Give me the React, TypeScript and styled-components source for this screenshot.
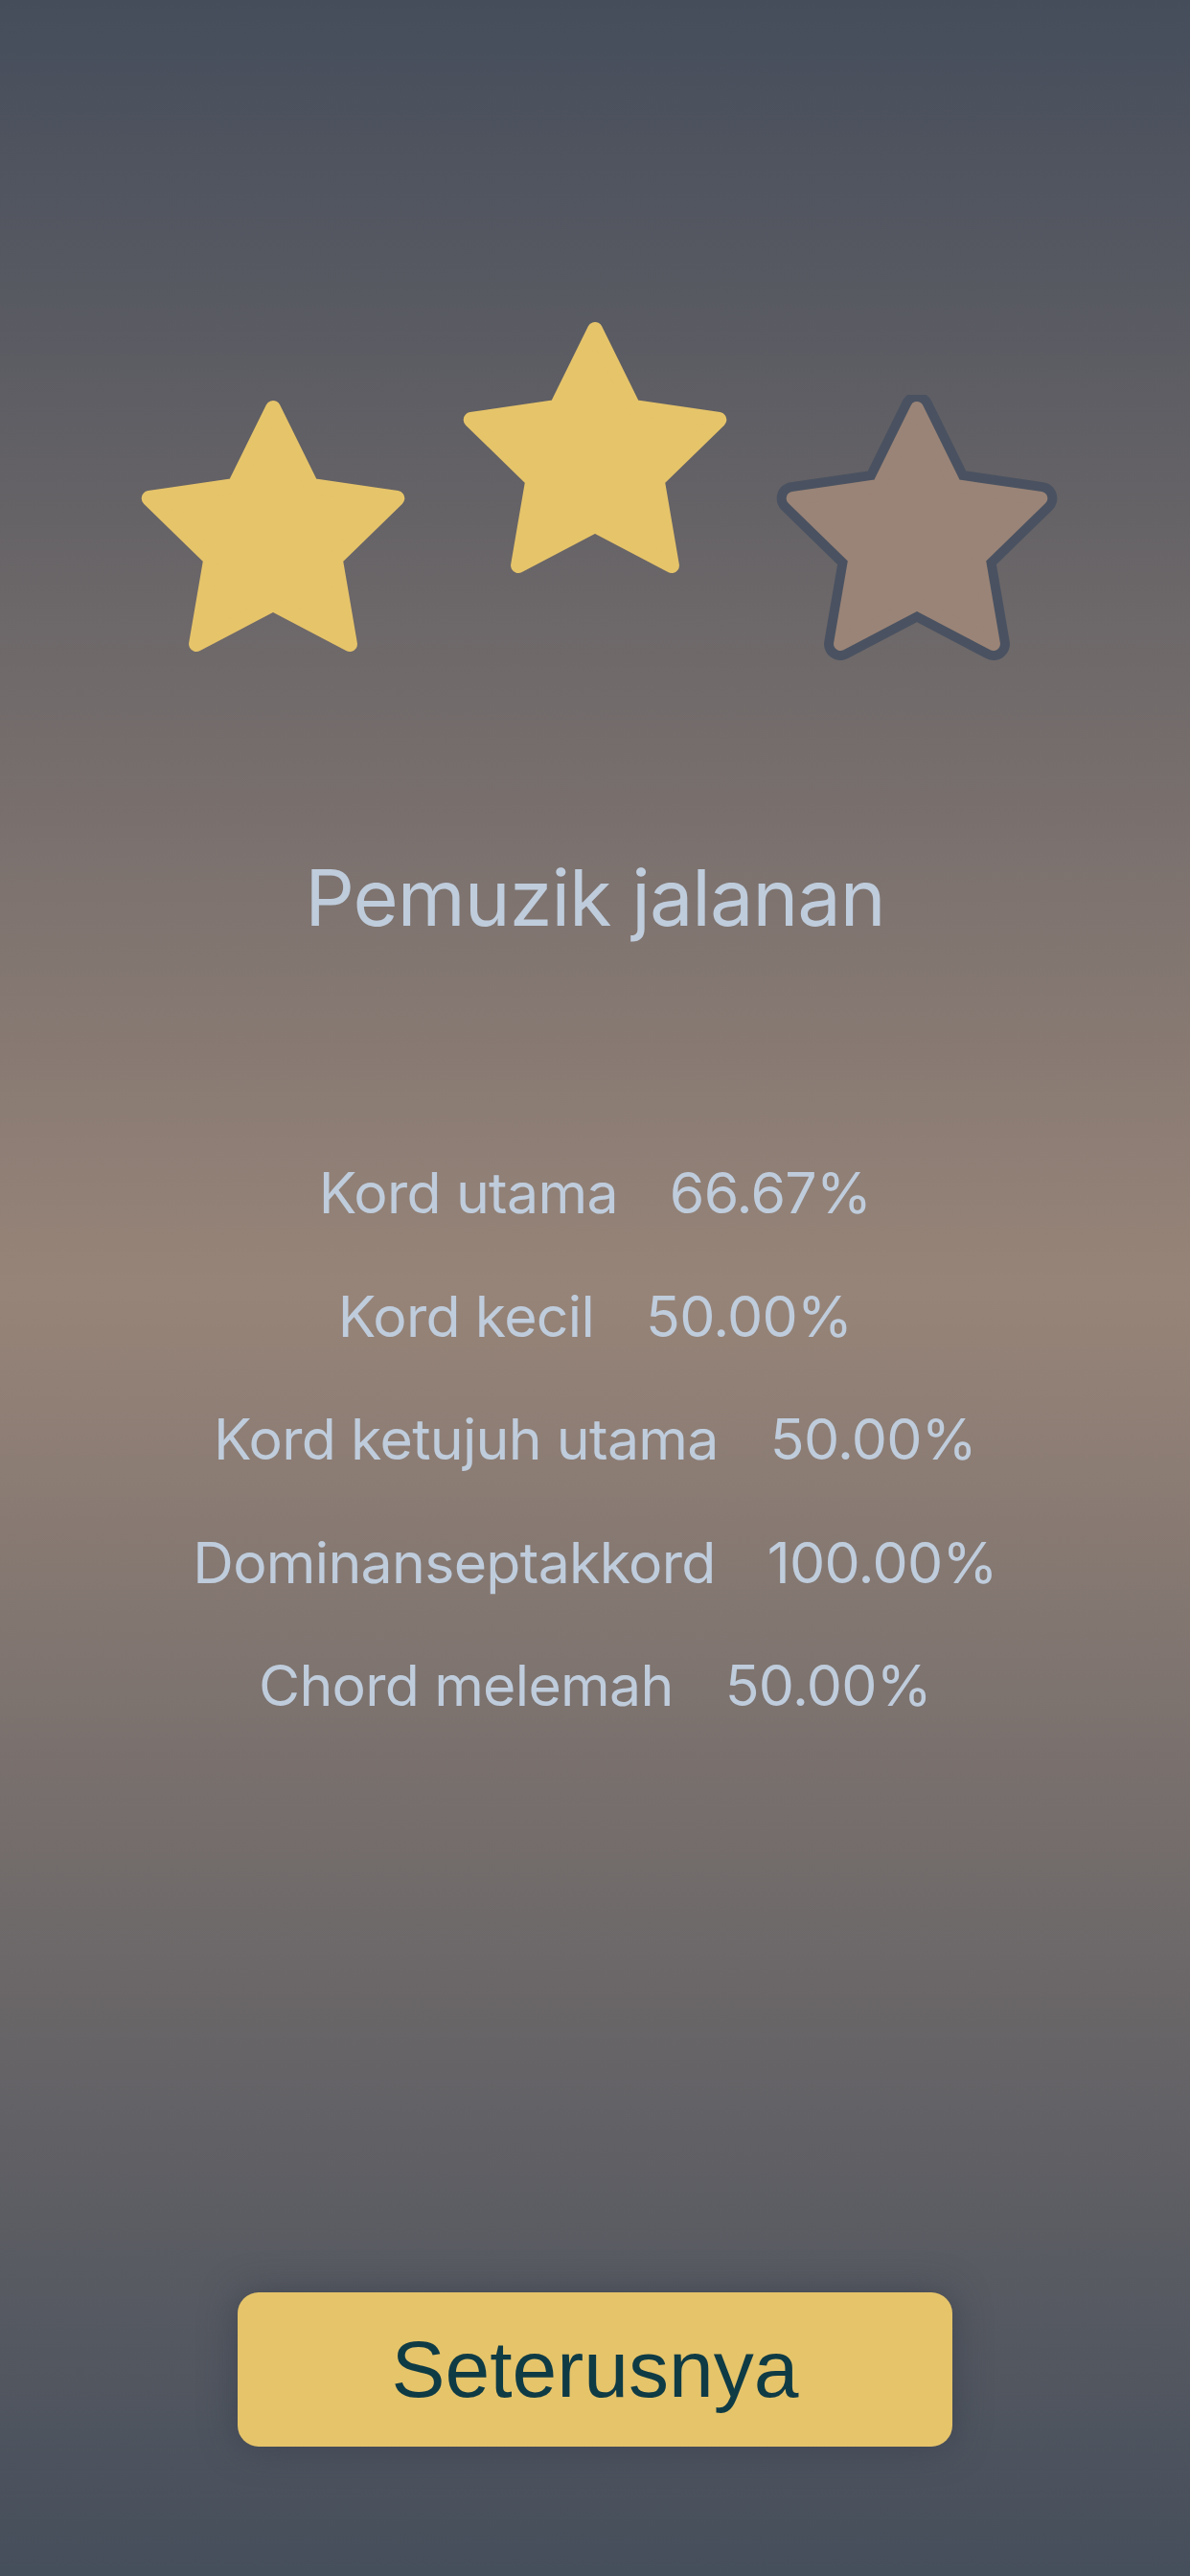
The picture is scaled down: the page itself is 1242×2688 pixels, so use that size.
import styled, { createGlobalStyle } from 'styled-components';

const GlobalStyle = createGlobalStyle`
  html, body {
    margin: 0;
    padding: 0;
  }
  body {
    background: #454d5b;
  }
`;

const STAR_GOLD = '#e6c46a';
const STAR_EMPTY = '#9a8477';
const STAR_EDGE = '#4a5261';

const results = [
  { label: 'Kord utama', value: '66.67%' },
  { label: 'Kord kecil', value: '50.00%' },
  { label: 'Kord ketujuh utama', value: '50.00%' },
  { label: 'Dominanseptakkord', value: '100.00%' },
  { label: 'Chord melemah', value: '50.00%' },
];

// five pointed star, centre at 0,0
const starPoints = (outer: number, inner: number) => {
  const pts: string[] = [];
  for (let i = 0; i < 10; i++) {
    const r = i % 2 === 0 ? outer : inner;
    const a = (Math.PI / 5) * i - Math.PI / 2;
    pts.push(`${(r * Math.cos(a)).toFixed(2)},${(r * Math.sin(a)).toFixed(2)}`);
  }
  return pts.join(' ');
};

const Star = ({ filled, lift }: { filled: boolean; lift?: boolean }) => {
  const pts = starPoints(136, 68);
  return (
    <StarBox $lift={lift}>
      <svg width="300" height="300" viewBox="-150 -150 300 300">
        {filled ? (
          <polygon points={pts} fill={STAR_GOLD} stroke={STAR_GOLD} strokeWidth={16} strokeLinejoin="round" />
        ) : (
          <>
            <polygon points={pts} fill={STAR_EDGE} stroke={STAR_EDGE} strokeWidth={34} strokeLinejoin="round" />
            <polygon points={pts} fill={STAR_EMPTY} stroke={STAR_EMPTY} strokeWidth={14} strokeLinejoin="round" />
          </>
        )}
      </svg>
    </StarBox>
  );
};

const App = () => {
  return (
    <Page>
      <GlobalStyle />
      <StarRow>
        <Star filled />
        <Star filled lift />
        <Star filled={false} />
      </StarRow>
      <Title>Pemuzik jalanan</Title>
      <ResultList>
        {results.map((r) => (
          <ResultRow key={r.label}>
            <span>{r.label}</span>
            <span>{r.value}</span>
          </ResultRow>
        ))}
      </ResultList>
      <NextButton>Seterusnya</NextButton>
    </Page>
  );
};

export default App;

const Page = styled.div`
  width: 1242px;
  min-height: 2688px;
  display: flex;
  flex-direction: column;
  align-items: center;
  background: linear-gradient(180deg, #454d5b 0%, #978478 50%, #454e5b 100%);
  font-family: Inter, 'Noto Sans', sans-serif;
  color: #bfccdc;
`;

const StarRow = styled.div`
  margin-top: 330px;
  display: flex;
  align-items: flex-start;
  gap: 36px;
`;

const StarBox = styled.div<{ $lift?: boolean }>`
  width: 300px;
  height: 300px;
  margin-top: ${(p) => (p.$lift ? '0px' : '82px')};

  svg {
    display: block;
  }
`;

const Title = styled.h1`
  margin: 183px 0 0;
  font-size: 81px;
  font-weight: 400;
  line-height: 84px;
  letter-spacing: -1px;
`;

const ResultList = styled.div`
  margin-top: 202px;
  display: flex;
  flex-direction: column;
  align-items: center;
`;

const ResultRow = styled.div`
  display: flex;
  gap: 54px;
  font-size: 59px;
  line-height: 128.5px;
  letter-spacing: -0.7px;
`;

const NextButton = styled.button`
  margin-top: 568px;
  width: 746px;
  height: 161px;
  border: none;
  border-radius: 22px;
  background: ${STAR_GOLD};
  box-shadow: 0 0 36px rgba(48, 54, 70, 0.55);
  color: #0f3b45;
  font-family: 'Liberation Sans', Arial, sans-serif;
  font-size: 84px;
  display: flex;
  align-items: center;
  justify-content: center;
  padding: 0;
`;
